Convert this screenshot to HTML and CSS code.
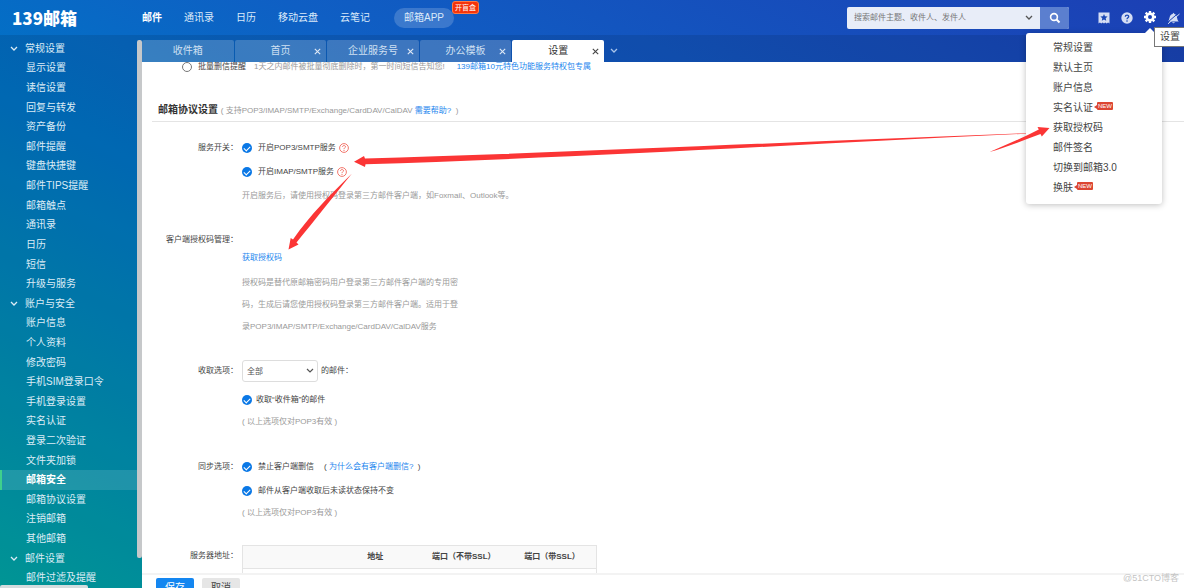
FILE: index.html
```html
<!DOCTYPE html>
<html lang="zh-CN">
<head>
<meta charset="utf-8">
<title>139邮箱 - 设置</title>
<link rel="stylesheet" href="styles.css">
</head>
<body>
<div class="app">
  <header class="topbar">
    <h1 class="logo">139邮箱</h1>
    <nav class="mainnav">
      <a href="#" class="current">邮件</a>
      <a href="#">通讯录</a>
      <a href="#">日历</a>
      <a href="#">移动云盘</a>
      <a href="#">云笔记</a>
      <a href="#" class="pill">邮箱APP<span class="flag">开盲盒</span></a>
    </nav>
    <form class="search">
      <input type="text" placeholder="搜索邮件主题、收件人、发件人" aria-label="搜索">
      <button type="button" class="search-more" aria-label="更多搜索"><svg width="8" height="6" viewBox="0 0 8 6"><path d="M1 1l3 3 3-3" fill="none" stroke="#555" stroke-width="1.3"/></svg></button>
      <button type="button" class="search-go" aria-label="搜索邮件"><svg width="12" height="12" viewBox="0 0 12 12"><circle cx="5" cy="5" r="3.4" fill="none" stroke="#fff" stroke-width="1.6"/><path d="M7.5 7.5L10.5 10.5" stroke="#fff" stroke-width="2"/></svg></button>
    </form>
    <div class="tools">
      <button type="button" aria-label="收藏"><svg width="12" height="12" viewBox="0 0 12 12"><path d="M0.5 0.5h11v11l-1.4-.9-1.4.9-1.4-.9-1.3.9-1.4-.9-1.3.9-1.4-.9-1.4.9z" fill="#d5def4"/><path d="M6 2l1 2.300 2.600.3-1.900 1.700.5 2.500L6 7.600l-2.200 1.200.5-2.500L2.400 4.600 5 4.300z" fill="#1b48b5"/></svg></button>
      <button type="button" aria-label="帮助"><svg width="12" height="12" viewBox="0 0 12 12"><circle cx="6" cy="6" r="5.700" fill="#d5def4"/><path d="M4.300 4.800C4.300 2.500 7.800 2.600 7.700 4.600 7.600 5.800 6 5.700 6 7.300" fill="none" stroke="#1b48b5" stroke-width="1.300"/><circle cx="6" cy="9" r=".8" fill="#1b48b5"/></svg></button>
      <div class="settings">
        <button type="button" aria-label="设置"><svg width="12" height="12" viewBox="0 0 12 12"><circle cx="6" cy="6" r="3.300" fill="none" stroke="#fff" stroke-width="2.600"/><path d="M6 0v2M6 10v2M0 6h2M10 6h2M1.700 1.700l1.500 1.500M8.800 8.800l1.500 1.500M1.700 10.300l1.500-1.500M8.800 3.200l1.500-1.500" stroke="#fff" stroke-width="2.400"/></svg></button>
        <ul class="menu">
          <li><a href="#">常规设置</a></li>
          <li><a href="#">默认主页</a></li>
          <li><a href="#">账户信息</a></li>
          <li><a href="#">实名认证<span class="new">NEW</span></a></li>
          <li><a href="#">获取授权码</a></li>
          <li><a href="#">邮件签名</a></li>
          <li><a href="#">切换到邮箱3.0</a></li>
          <li><a href="#">换肤<span class="new">NEW</span></a></li>
        </ul>
        <span class="tooltip" role="tooltip">设置</span>
      </div>
      <button type="button" aria-label="消息提醒"><svg width="13" height="12" viewBox="0 0 13 12"><path d="M1 9.500C3 7.500 1.800 3 5.500 2L6.500.7 7.500 2C10.800 3 9.500 7.500 11.800 9.500zM5 10.200h3q-1.500 2-3 0z" fill="#d5def4"/><path d="M0 10.800L11.500 1" stroke="#1b44b4" stroke-width="1"/><path d="M1 11.800L12.500 2" stroke="#d5def4"/></svg></button>
    </div>
  </header>

  <div class="body">
    <aside class="sidebar">
      <ul class="side">
        <li class="group"><a href="#"><svg width="8" height="6" viewBox="0 0 8 6"><path d="M1 1l3 3 3-3"/></svg>常规设置</a></li>
        <li><a href="#">显示设置</a></li>
        <li><a href="#">读信设置</a></li>
        <li><a href="#">回复与转发</a></li>
        <li><a href="#">资产备份</a></li>
        <li><a href="#">邮件提醒</a></li>
        <li><a href="#">键盘快捷键</a></li>
        <li><a href="#">邮件TIPS提醒</a></li>
        <li><a href="#">邮箱触点</a></li>
        <li><a href="#">通讯录</a></li>
        <li><a href="#">日历</a></li>
        <li><a href="#">短信</a></li>
        <li><a href="#">升级与服务</a></li>
        <li class="group"><a href="#"><svg width="8" height="6" viewBox="0 0 8 6"><path d="M1 1l3 3 3-3"/></svg>账户与安全</a></li>
        <li><a href="#">账户信息</a></li>
        <li><a href="#">个人资料</a></li>
        <li><a href="#">修改密码</a></li>
        <li><a href="#">手机SIM登录口令</a></li>
        <li><a href="#">手机登录设置</a></li>
        <li><a href="#">实名认证</a></li>
        <li><a href="#">登录二次验证</a></li>
        <li><a href="#">文件夹加锁</a></li>
        <li class="active"><a href="#">邮箱安全</a></li>
        <li><a href="#">邮箱协议设置</a></li>
        <li><a href="#">注销邮箱</a></li>
        <li><a href="#">其他邮箱</a></li>
        <li class="group"><a href="#"><svg width="8" height="6" viewBox="0 0 8 6"><path d="M1 1l3 3 3-3"/></svg>邮件设置</a></li>
        <li><a href="#">邮件过滤及提醒</a></li>
      </ul>
      <div class="track"><div class="thumb"></div></div>
      <div class="hthumb"></div>
    </aside>

    <main class="main">
      <div class="tabbar">
        <div class="tabs">
          <div class="tab"><span>收件箱</span></div>
          <div class="tab"><span>首页</span><button type="button" aria-label="关闭首页"><svg width="7" height="7" viewBox="0 0 7 7"><path d="M.8.8l5.400 5.400M6.200.8L.8 6.200"/></svg></button></div>
          <div class="tab"><span>企业服务号</span><button type="button" aria-label="关闭企业服务号"><svg width="7" height="7" viewBox="0 0 7 7"><path d="M.8.8l5.400 5.400M6.200.8L.8 6.200"/></svg></button></div>
          <div class="tab"><span>办公模板</span><button type="button" aria-label="关闭办公模板"><svg width="7" height="7" viewBox="0 0 7 7"><path d="M.8.8l5.400 5.400M6.200.8L.8 6.200"/></svg></button></div>
          <div class="tab on"><span>设置</span><button type="button" aria-label="关闭设置"><svg width="7" height="7" viewBox="0 0 7 7"><path d="M.8.8l5.400 5.400M6.200.8L.8 6.200"/></svg></button></div>
        </div>
        <button type="button" class="more-tabs" aria-label="更多标签"><svg width="8" height="6" viewBox="0 0 8 6"><path d="M1 1l3 3 3-3"/></svg></button>
      </div>

      <div class="scroll">
        <div class="remind">
          <input type="radio" id="batch"><label for="batch">批量删信提醒</label>
          <span class="hint">1天之内邮件被批量彻底删除时，第一时间短信告知您!</span>
          <a href="#">139邮箱10元特色功能服务特权包专属</a>
        </div>
        <h2 class="title">邮箱协议设置 <small>( 支持POP3/IMAP/SMTP/Exchange/CardDAV/CalDAV <a href="#">需要帮助?</a> &nbsp;)</small></h2>

        <div class="form">
          <section class="row">
            <div class="name tall">服务开关：</div>
            <div class="field">
              <div class="line tall"><input type="checkbox" id="pop" checked><label for="pop">开启POP3/SMTP服务</label><svg class="q" width="10" height="10" viewBox="0 0 10 10"><circle cx="5" cy="5" r="4.400"/><path d="M3.500 4C3.500 2 6.600 2.100 6.500 3.800 6.400 4.900 5 4.800 5 6.200M5 7v1"/></svg></div>
              <div class="line tall"><input type="checkbox" id="imap" checked><label for="imap">开启IMAP/SMTP服务</label><svg class="q" width="10" height="10" viewBox="0 0 10 10"><circle cx="5" cy="5" r="4.400"/><path d="M3.500 4C3.500 2 6.600 2.100 6.500 3.800 6.400 4.900 5 4.800 5 6.200M5 7v1"/></svg></div>
              <div class="line tall hint">开启服务后，请使用授权码登录第三方邮件客户端，如Foxmail、Outlook等。</div>
            </div>
          </section>
          <section class="row">
            <div class="name">客户端授权码管理：</div>
            <div class="field auth">
              <a href="#">获取授权码</a>
              <p class="hint">授权码是替代原邮箱密码用户登录第三方邮件客户端的专用密码，生成后请您使用授权码登录第三方邮件客户端。适用于登录POP3/IMAP/SMTP/Exchange/CardDAV/CalDAV服务</p>
            </div>
          </section>
          <section class="row">
            <label class="name mid" for="scope">收取选项：</label>
            <div class="field">
              <div class="line pick"><select id="scope"><option>全部</option></select>的邮件：</div>
              <div class="line near"><input type="checkbox" id="inbox" checked><label for="inbox">收取“收件箱”的邮件</label></div>
              <div class="line hint">( 以上选项仅对POP3有效 )</div>
            </div>
          </section>
          <section class="row">
            <div class="name tall">同步选项：</div>
            <div class="field">
              <div class="line tall"><input type="checkbox" id="nodel" checked><label for="nodel">禁止客户端删信</label><span class="why">( <a href="#">为什么会有客户端删信?</a> &nbsp;)</span></div>
              <div class="line tall"><input type="checkbox" id="unread" checked><label for="unread">邮件从客户端收取后未读状态保持不变</label></div>
              <div class="line hint snug">( 以上选项仅对POP3有效 )</div>
            </div>
          </section>
          <section class="row">
            <div class="name mid">服务器地址：</div>
            <table class="servers">
              <thead><tr><th></th><th>地址</th><th>端口（不带SSL）</th><th>端口（带SSL）</th></tr></thead>
              <tbody><tr><td></td><td></td><td></td><td></td></tr></tbody>
            </table>
          </section>
        </div>
      </div>

      <div class="actions">
        <button type="button" class="save">保存</button>
        <button type="button" class="cancel">取消</button>
        <span class="mark">@51CTO博客</span>
      </div>
    </main>
  </div>

  <svg class="arrows" width="1184" height="588" viewBox="0 0 1184 588" aria-hidden="true">
    <path d="M354 161.800L364 156 365 158.600C560 153 800 141.500 1026 133.200L1026 133.700C800 144.500 560 158.500 365.500 164.200L365 167z"/>
    <path d="M288.500 249.500L290.700 238 293 239.500C310 215 330 195 352 173.500 332 198 315 220 296.500 242.500L298.500 244.500z"/>
    <path d="M1049.500 128L1037.500 127 1038.800 129.500C1022 138 1006 145 989.500 152 1007 147 1024 140 1040.500 134L1041.800 136.500z"/>
  </svg>
</div>
</body>
</html>
```
FILE: styles.css
```css
* { box-sizing: border-box; }

body {
  margin: 0;
  font-family: "Liberation Sans", "Noto Sans CJK SC", sans-serif;
  font-size: 8px;
  color: #444;
}

ul, h1, h2, p { margin: 0; padding: 0; }
ul { list-style: none; }
a { color: #1c86ee; text-decoration: none; }
button { border: 0; padding: 0; background: none; font: inherit; color: inherit; }
svg { display: block; flex: none; }

.app {
  position: relative;
  display: flex;
  flex-direction: column;
  height: 100vh;
  overflow: hidden;
  background: linear-gradient(to top right, #00a8a4 0%, #0088b8 25%, #0074c6 42%, #0f5fc4 62%, #1c3fb4 100%);
}

/* top bar */
.topbar {
  display: flex;
  align-items: center;
  height: 35px;
  flex: none;
  padding-right: 4px;
  font-size: 10px;
}
.logo {
  width: 142px;
  padding-left: 12px;
  color: #fff;
  font: 900 17px/32px "Noto Sans CJK SC", sans-serif;
}
.mainnav { display: flex; align-items: center; gap: 22px; line-height: 20px; }
.mainnav a { color: #dbeafa; white-space: nowrap; }
.mainnav .current { color: #fff; font-weight: bold; }
.mainnav .pill {
  position: relative;
  width: 60px;
  margin-left: 2px;
  border-radius: 10px;
  background: rgba(255, 255, 255, .18);
  text-align: center;
}
.flag {
  position: absolute;
  left: 58px;
  top: -7px;
  padding: 0 2px;
  border: 1px solid #ff7a45;
  border-radius: 3px;
  background: #f5330a;
  color: #fff;
  font-size: 7px;
  line-height: 11px;
}
.search {
  display: flex;
  width: 222px;
  height: 22px;
  margin-left: auto;
  margin-right: 29px;
  border-radius: 2px;
  overflow: hidden;
  background: #e8edf8;
}
.search input {
  flex: 1;
  min-width: 0;
  border: 0;
  padding: 0 7px;
  background: none;
  font: inherit;
  font-size: 8px;
}
.search input::placeholder { color: #777; }
.search-more { width: 22px; display: grid; place-items: center; }
.search-go { width: 29px; display: grid; place-items: center; background: #5b7fcf; }
.tools { display: flex; gap: 11px; align-items: center; }
.settings { position: relative; }

.menu {
  position: absolute;
  z-index: 3;
  top: 22px;
  right: -6px;
  width: 136px;
  padding: 5px 0 6px 27px;
  border-radius: 3px;
  background: #fff;
  box-shadow: 0 1px 6px rgba(0, 0, 0, .25);
  line-height: 20px;
}
.menu::before {
  content: "";
  position: absolute;
  top: -5px;
  right: 7px;
  border: 5px solid transparent;
  border-top: 0;
  border-bottom-color: #fff;
}
.menu a { display: flex; color: #444; }
.new {
  position: relative;
  align-self: center;
  margin: 0 0 4px 4px;
  padding: 0 1px;
  border-radius: 1px;
  background: #dc4632;
  color: #fff;
  font-size: 6px;
  line-height: 8px;
}
.new::before {
  content: "";
  position: absolute;
  left: -3px;
  top: 3px;
  border: 2px solid transparent;
  border-left: 0;
  border-right: 3px solid #dc4632;
}
.tooltip {
  position: absolute;
  z-index: 4;
  left: 10px;
  top: 16px;
  width: 40px;
  padding-left: 5px;
  border: 1px solid #777;
  background: #fff;
  color: #444;
  line-height: 18px;
}

/* sidebar */
.body { display: flex; flex: 1; min-height: 0; background: rgba(0, 20, 50, .13); }
.sidebar { position: relative; display: flex; width: 142px; flex: none; }
.side { display: flex; flex-direction: column; flex: 1; padding-top: 4px; font-size: 10px; }
.side li { display: flex; flex: 1; min-height: 0; border-left: 2px solid transparent; }
.side a { display: flex; align-items: center; flex: 1; padding-left: 24px; color: #dcecf6; line-height: 16px; }
.side .group a { padding-left: 8px; gap: 7px; }
.side path, .more-tabs path { fill: none; stroke: #dcecf6; stroke-width: 1.3; }
.side .active { border-color: #3fd08c; background: rgba(255, 255, 255, .12); }
.side .active a { color: #fff; font-weight: bold; }
.track { width: 5px; padding: 5px 0 30px; }
.thumb { height: 100%; border-radius: 2px; background: #c6c8ca; }
.hthumb {
  position: absolute;
  left: 0;
  bottom: 0;
  width: 88px;
  height: 3px;
  border-radius: 2px 2px 0 0;
  background: #d4dcde;
}

/* tabs */
.main { display: flex; flex-direction: column; flex: 1; min-width: 0; }
.tabbar { display: flex; flex: none; padding-top: 5px; font-size: 10px; line-height: 22px; }
.tabs { display: grid; grid-template-columns: repeat(5, 1fr); gap: 1px; width: 462px; }
.tab {
  display: flex;
  align-items: center;
  justify-content: flex-end;
  border-radius: 2px 2px 0 0;
  background: rgba(255, 255, 255, .2);
  color: #d0e0f2;
}
.tab span { flex: 1; text-align: center; }
.tab button { width: 7px; margin-left: -12px; margin-right: 5px; }
.tab path { fill: none; stroke: #dfe9f6; stroke-width: 1.1; }
.tab.on { background: #fff; color: #333; }
.tab.on path { stroke: #444; }
.more-tabs { padding: 0 6px; }
.more-tabs path { stroke: #a9c4ea; }

/* content */
.scroll { flex: 1; min-height: 0; overflow: hidden; background: #fff; }
.hint { color: #999; }
.remind { display: flex; align-items: center; margin-top: -7px; padding-left: 40px; line-height: 24px; }
.remind label { margin: 0 8px 0 6px; }
.remind a { margin-left: 12px; }
.remind input {
  appearance: none;
  width: 10px;
  height: 10px;
  margin: 0;
  border: 1px solid #777;
  border-radius: 50%;
}
.title {
  margin: 21px 0 0 10px;
  padding-left: 6px;
  border-bottom: 1px solid #e4e4e4;
  color: #333;
  font-size: 10px;
  line-height: 20px;
}
.title small { color: #999; font-size: 8px; font-weight: normal; }
.form { display: flex; flex-direction: column; gap: 22px; padding-top: 14px; }
.row { display: grid; grid-template-columns: 96px 1fr; column-gap: 4px; }
.name { text-align: right; line-height: 20px; white-space: nowrap; }
.name.mid { line-height: 22px; }
.line { display: flex; align-items: center; line-height: 22px; }
.name.tall, .line.tall { line-height: 24px; }
.line.snug { line-height: 20px; }
.near { margin-top: 7px; }
.line input {
  appearance: none;
  display: grid;
  place-items: center;
  width: 10px;
  height: 10px;
  margin: 0 6px 0 0;
  border-radius: 50%;
  background: #0a78e6;
}
.line.near input { margin-right: 4px; }
.line input::before {
  content: "";
  width: 5px;
  height: 3px;
  margin-bottom: 1px;
  border: solid #fff;
  border-width: 0 0 1px 1px;
  transform: rotate(-45deg);
}
.q { margin-left: 3px; fill: none; stroke: #f0685c; stroke-width: .9; }
.why { margin-left: 10px; }
.auth { padding-top: 19px; line-height: 18px; }
.auth p { width: 220px; margin-top: 5px; line-height: 22px; }
.pick { gap: 3px; }
.pick select {
  appearance: none;
  width: 76px;
  height: 22px;
  padding: 0 4px;
  border: 1px solid #ddd;
  border-radius: 3px;
  background: #fff url("data:image/svg+xml,%3Csvg xmlns='http://www.w3.org/2000/svg' width='8' height='6'%3E%3Cpath d='M1 1l3 3 3-3' fill='none' stroke='%23555' stroke-width='1.2'/%3E%3C/svg%3E") no-repeat right 3px center;
  color: #555;
  font: inherit;
}
.servers { width: 355px; border-collapse: collapse; table-layout: fixed; border: 1px solid #e4e4e4; }
.servers th { padding: 0; background: #f9f9f9; border-bottom: 1px solid #e4e4e4; line-height: 22px; }
.servers td { height: 22px; }

.actions {
  position: relative;
  display: flex;
  flex: none;
  gap: 8px;
  height: 15px;
  padding: 3px 14px 0;
  border-top: 2px solid #f3f3f3;
  background: #fff;
  font-size: 10px;
}
.actions button { width: 38px; height: 20px; border-radius: 2px; line-height: 16px; }
.save { background: #1486f0; color: #fff; }
.cancel { background: #e6e6e6; color: #444; }
.mark { position: absolute; right: 5px; top: -2px; color: #c4c4c4; font-size: 9px; line-height: 10px; }

.arrows { position: absolute; z-index: 5; left: 0; top: 0; fill: #fb3535; pointer-events: none; }
```
